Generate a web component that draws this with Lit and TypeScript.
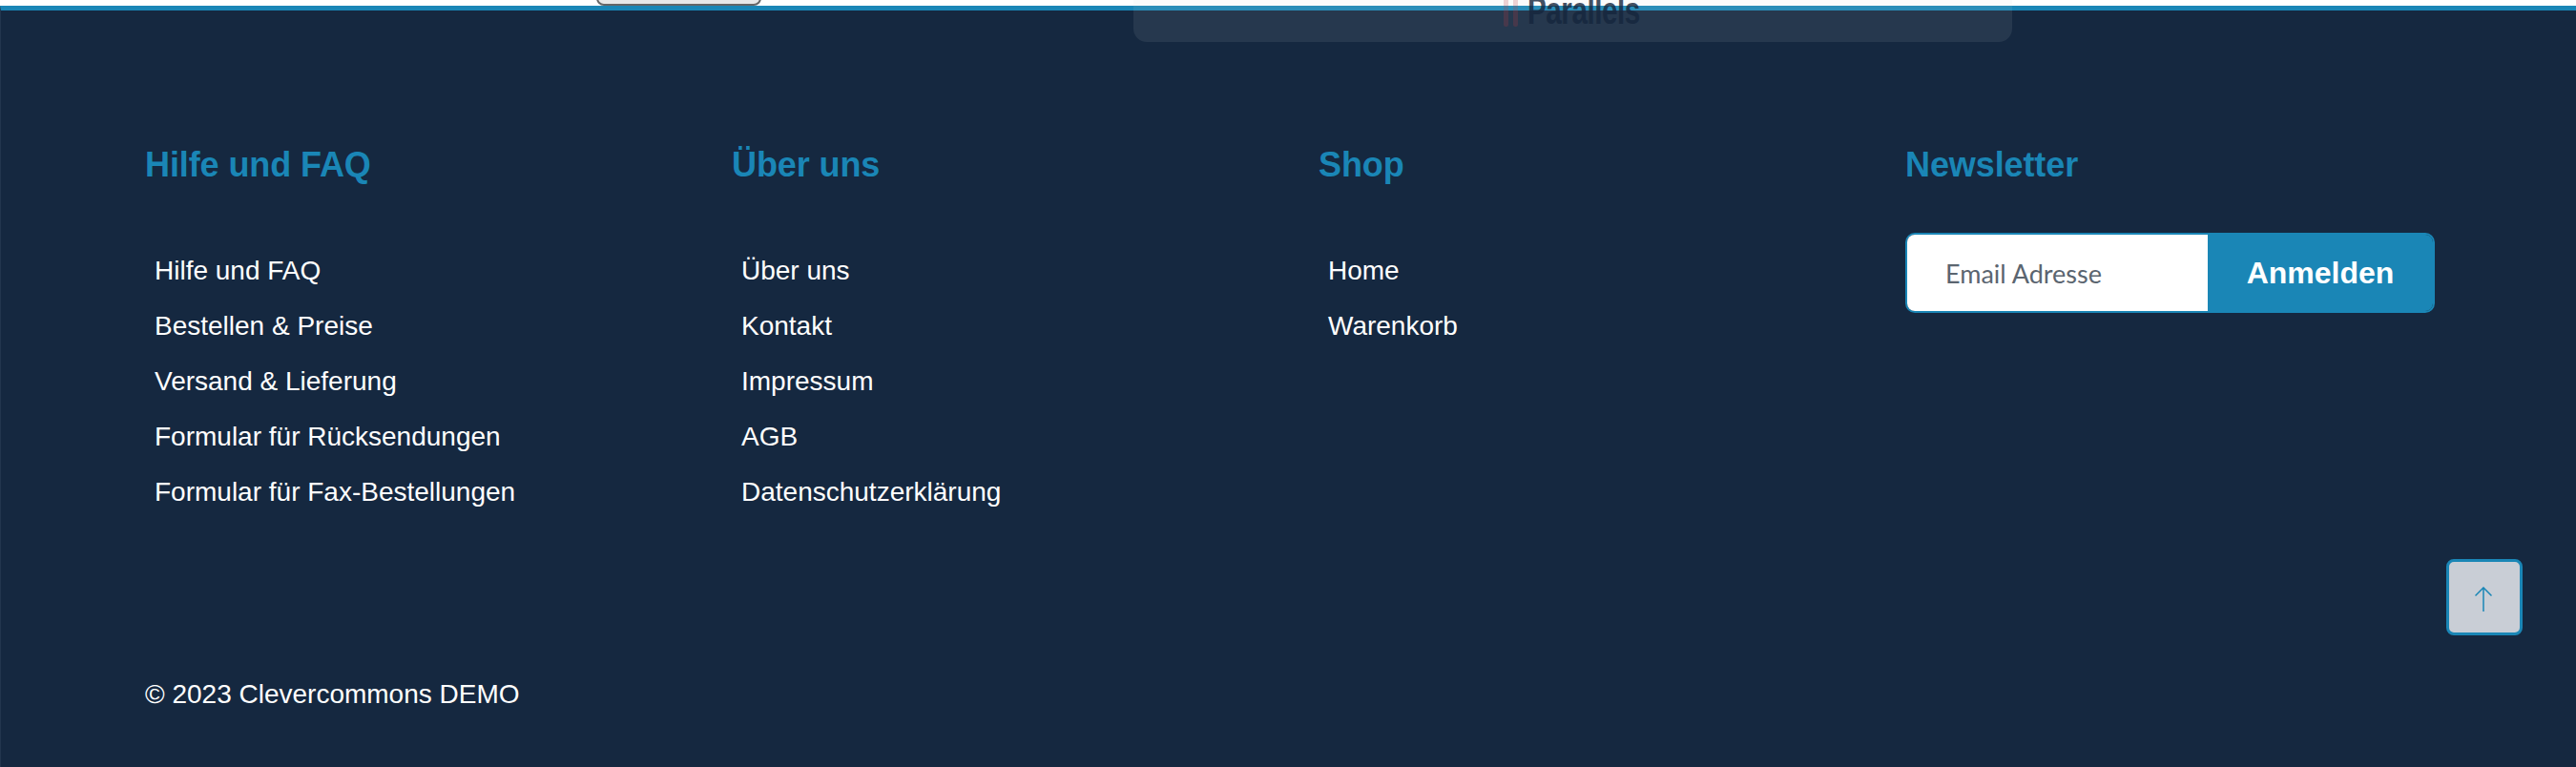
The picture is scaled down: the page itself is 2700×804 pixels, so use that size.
import { LitElement, html, css } from "lit";
import { customElement } from "lit/decorators.js";

const columns = [
  { title: "Hilfe und FAQ", links: ["Hilfe und FAQ", "Bestellen & Preise", "Versand & Lieferung", "Formular für Rücksendungen", "Formular für Fax-Bestellungen"] },
  { title: "Über uns", links: ["Über uns", "Kontakt", "Impressum", "AGB", "Datenschutzerklärung"] },
  { title: "Shop", links: ["Home", "Warenkorb"] },
];

@customElement("app-root")
export class AppRoot extends LitElement {
  static styles = css`
    :host { display: block; position: relative; height: 804px; overflow: hidden; background: #fff; font-family: "Liberation Sans", Arial, sans-serif; }
    .footer { box-sizing: border-box; margin-top: 6px; height: 798px; background: #152840; border-top: 5px solid #1a86b6; border-left: 1px solid #22364e; padding: 143px 0 0 151px; color: #fff; display: flex; flex-direction: column; }
    .cols { display: grid; grid-template-columns: repeat(4, 615px); height: 557px; }
    h3 { margin: 0 0 76px; font-size: 36px; line-height: 38px; font-weight: 700; color: #1a86b6; letter-spacing: -.1px; }
    h3.news { margin-bottom: 52px; }
    ul { list-style: none; margin: 0; padding: 0 0 0 10px; display: flex; flex-direction: column; gap: 26px; }
    li { font-size: 28px; line-height: 32px; white-space: nowrap; }
    .form { display: flex; width: 555px; height: 84px; box-sizing: border-box; border: 2px solid #1a86b6; border-radius: 10px; overflow: hidden; }
    .email { width: 315px; background: #fff; color: #5b6570; font: 400 27px Lato, sans-serif; display: flex; align-items: center; padding-left: 40px; box-sizing: border-box; }
    .submit { flex: 1; background: #1a86b6; color: #fff; font-size: 32px; font-weight: 700; display: flex; align-items: center; justify-content: center; }
    .copy { font-size: 28px; line-height: 34px; }
    .button-stub { position: absolute; left: 625px; top: -20px; width: 173px; height: 26px; box-sizing: border-box; background: #e8e8e8; border: 2px solid #666; border-radius: 8px; }
    .panel { position: absolute; left: 1188px; top: -20px; width: 921px; height: 64px; border-radius: 14px; background: rgba(205, 210, 215, 0.094); }
    .brand { position: absolute; left: 1576px; top: -5px; display: flex; align-items: flex-start; gap: 10px; height: 34px; }
    .bars { display: flex; gap: 5px; height: 34px; }
    .bars i { width: 5px; height: 33px; border-radius: 2.5px; background: rgba(190, 60, 70, .22); }
    .word { font-size: 40px; line-height: 32px; font-weight: 700; color: #15263d; opacity: .8; display: inline-block; transform: scaleX(.74); transform-origin: left; letter-spacing: -.6px; }
    .top { position: absolute; left: 2564px; top: 586px; width: 80px; height: 80px; box-sizing: border-box; border: 3px solid #1a86b6; border-radius: 8px; background: #c9ced6; padding: 4px 2px 0 0; display: flex; align-items: center; justify-content: center; }
  `;

  render() {
    return html`
      <div class="footer">
        <div class="cols">
          ${columns.map((c) => html`<section><h3>${c.title}</h3><ul>${c.links.map((l) => html`<li>${l}</li>`)}</ul></section>`)}
          <section>
            <h3 class="news">Newsletter</h3>
            <div class="form"><div class="email">Email Adresse</div><div class="submit">Anmelden</div></div>
          </section>
        </div>
        <div class="copy">© 2023 Clevercommons DEMO</div>
      </div>
      <div class="button-stub"></div>
      <div class="panel"></div>
      <div class="brand"><span class="bars"><i></i><i></i></span><span class="word">Parallels</span></div>
      <div class="top">
        <svg width="18" height="26" viewBox="0 0 18 26" fill="none" stroke="#1a86b6" stroke-width="1.5"><path d="M9 26V1M.5 9.5L9 1l8.5 8.5"/></svg>
      </div>
    `;
  }
}
